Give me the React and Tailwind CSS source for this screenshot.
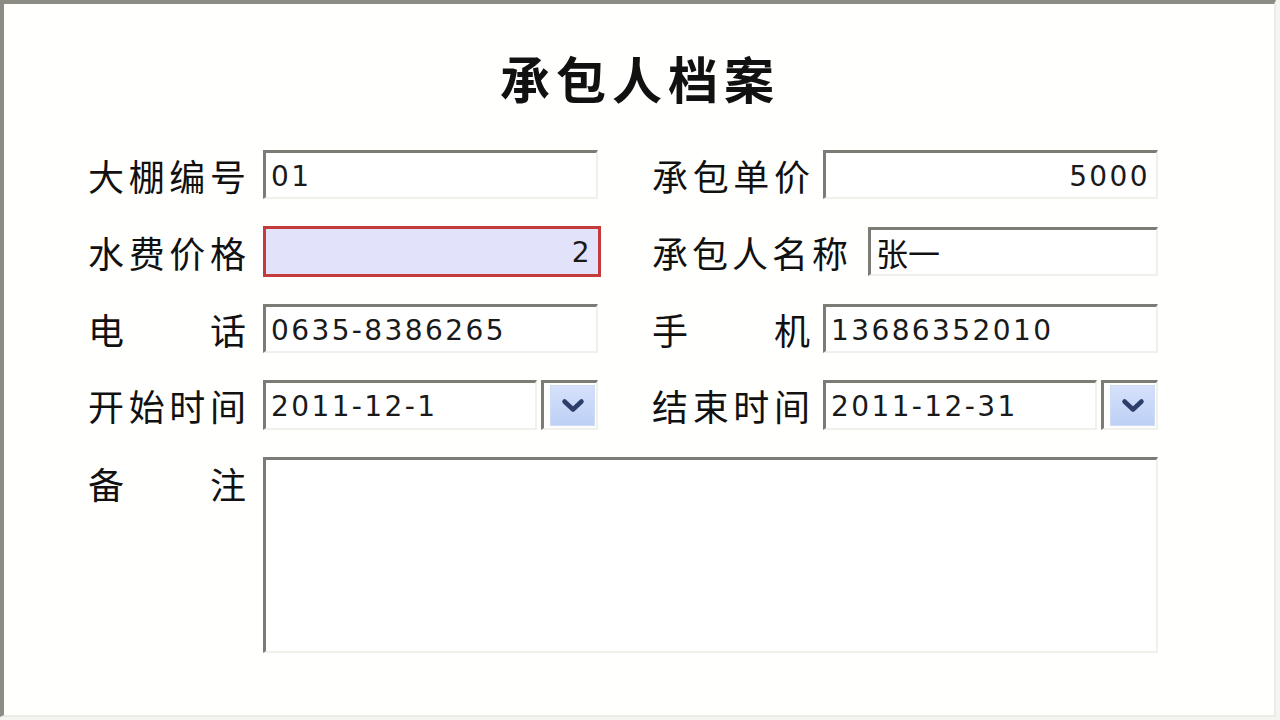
const cjk = { fontFamily: '"Noto Sans CJK SC", "Noto Sans", sans-serif' };
const mono = { fontFamily: '"DejaVu Sans", "Noto Sans CJK SC", sans-serif' };

const Label = ({ chars, className = "" }) => (
  <div
    className={"flex justify-between text-[36px] leading-none text-[#111] " + className}
    style={cjk}
  >
    {chars.map((c, i) => (
      <span key={i}>{c}</span>
    ))}
  </div>
);

const Field = ({ value, right, focus, className = "", cn }) => (
  <div
    className={
      "h-[49px] flex items-center px-[5px] text-[28px] tracking-[2.4px] " +
      (focus
        ? "border-[3px] border-[#c53a3a] bg-[#e2e2fa] "
        : "border-t-[3px] border-l-[3px] border-r-2 border-b-2 border-t-[#7c7c74] border-l-[#7c7c74] border-r-[#f1f1ec] border-b-[#f1f1ec] bg-white ") +
      (right ? "justify-end pr-[6px] " : "") +
      className
    }
    style={cn ? cjk : mono}
  >
    <span className={cn ? "text-[32px] tracking-normal text-[#111]" : "text-[#1a1a1a] pt-[3px]"}>{value}</span>
  </div>
);

const DropButton = ({ className = "" }) => (
  <div
    className={
      "h-[50px] flex items-center pl-[6px] border-t-[3px] border-l-[3px] border-r-2 border-b-2 border-t-[#7c7c74] border-l-[#7c7c74] border-r-[#f1f1ec] border-b-[#f1f1ec] bg-white " +
      className
    }
  >
    <div className="w-[45px] h-[41px] bg-gradient-to-b from-[#d6e2fb] to-[#bccff6] border border-[#cfdaf4] flex items-center justify-center">
      <svg width="24" height="16" viewBox="0 0 24 16">
        <path d="M3.5 3.5 L12 11.5 L20.5 3.5" fill="none" stroke="#2c3e6a" strokeWidth="4.5" strokeLinecap="round" strokeLinejoin="round" />
      </svg>
    </div>
  </div>
);

export default function App() {
  return (
    <div className="w-[1280px] h-[720px] bg-[#f4f4f0] overflow-hidden">
      <div className="w-[1276px] h-[717px] bg-[#fffffd] border-t-4 border-l-4 border-t-[#8c8c84] border-l-[#8c8c84] border-r-2 border-b-2 border-r-[#ececE6] border-b-[#ececE6]">
        <div className="pt-[48px] flex justify-center">
          <h1 className="text-[50px] leading-none font-bold tracking-[6px] text-[#111] pl-[6px] ml-[-4px]" style={cjk}>
            承包人档案
          </h1>
        </div>

        <div className="pl-[84px] pt-[48px] flex flex-col gap-[27px]">
          <div className="flex items-center">
            <Label chars={["大", "棚", "编", "号"]} className="w-[158px]" />
            <Field value="01" className="ml-[17px] w-[335px]" />
            <Label chars={["承", "包", "单", "价"]} className="w-[158px] ml-[54px]" />
            <Field value="5000" right className="ml-[13px] w-[335px]" />
          </div>

          <div className="flex items-center">
            <Label chars={["水", "费", "价", "格"]} className="w-[158px]" />
            <Field value="2" right focus className="ml-[17px] w-[338px] h-[51px]" />
            <Label chars={["承", "包", "人", "名", "称"]} className="w-[196px] ml-[51px]" />
            <Field value="张一" cn className="ml-[20px] w-[290px]" />
          </div>

          <div className="flex items-center">
            <Label chars={["电", "话"]} className="w-[158px]" />
            <Field value="0635-8386265" className="ml-[17px] w-[335px]" />
            <Label chars={["手", "机"]} className="w-[158px] ml-[54px]" />
            <Field value="13686352010" className="ml-[13px] w-[335px]" />
          </div>

          <div className="flex items-center">
            <Label chars={["开", "始", "时", "间"]} className="w-[158px]" />
            <Field value="2011-12-1" className="ml-[17px] w-[274px] h-[50px]" />
            <DropButton className="ml-[4px] w-[57px]" />
            <Label chars={["结", "束", "时", "间"]} className="w-[158px] ml-[54px]" />
            <Field value="2011-12-31" className="ml-[13px] w-[274px] h-[50px]" />
            <DropButton className="ml-[4px] w-[57px]" />
          </div>

          <div className="flex items-start">
            <Label chars={["备", "注"]} className="w-[158px] pt-[8px]" />
            <div className="ml-[17px] w-[895px] h-[196px] border-t-[3px] border-l-[3px] border-r-2 border-b-2 border-t-[#7c7c74] border-l-[#7c7c74] border-r-[#f1f1ec] border-b-[#f1f1ec] bg-white" />
          </div>
        </div>
      </div>
    </div>
  );
}
